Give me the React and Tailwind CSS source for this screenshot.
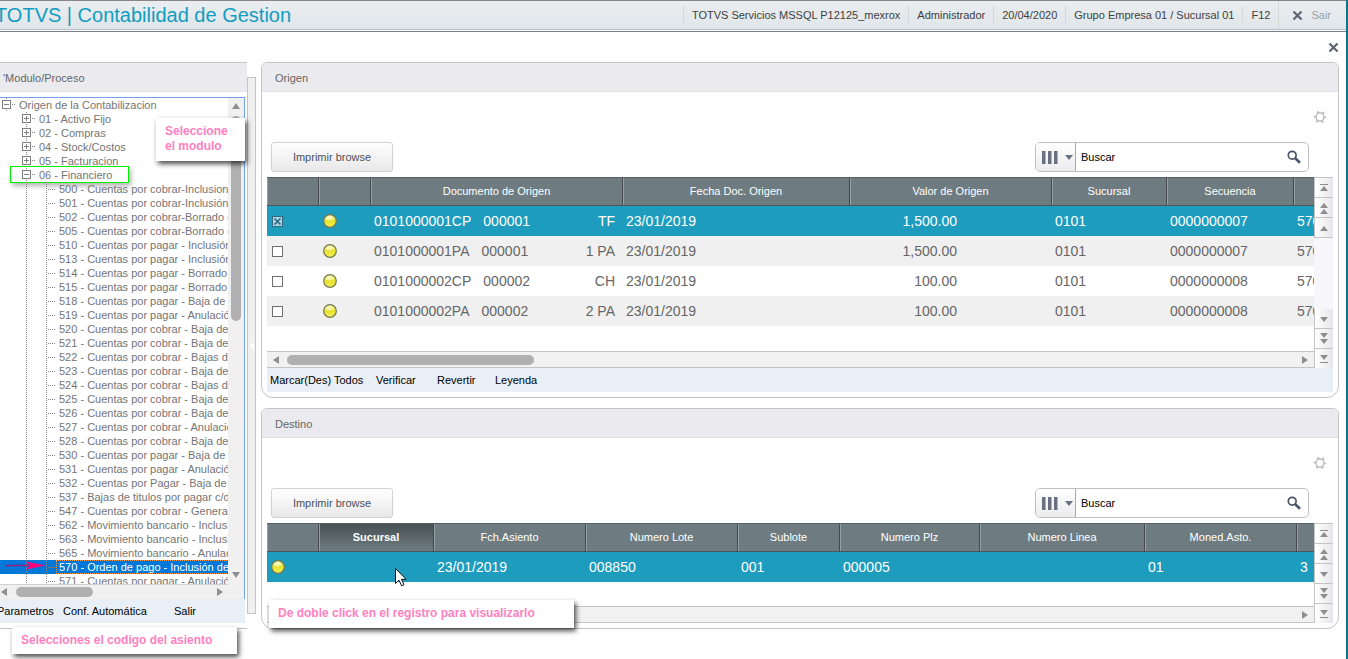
import React from "react";

const SESSION = [
  "TOTVS Servicios MSSQL P12125_mexrox",
  "Administrador",
  "20/04/2020",
  "Grupo Empresa 01 / Sucursal 01",
  "F12",
];

const MODULES = [
  "01 - Activo Fijo",
  "02 - Compras",
  "04 - Stock/Costos",
  "05 - Facturacion",
];

const PROCESSES = [
  "500 - Cuentas por cobrar-Inclusion",
  "501 - Cuentas por cobrar-Inclusión",
  "502 - Cuentas por cobrar-Borrado de",
  "505 - Cuentas por cobrar-Borrado de",
  "510 - Cuentas por pagar - Inclusión",
  "513 - Cuentas por pagar - Inclusión",
  "514 - Cuentas por pagar - Borrado",
  "515 - Cuentas por pagar - Borrado",
  "518 - Cuentas por pagar - Baja de título",
  "519 - Cuentas por pagar - Anulación",
  "520 - Cuentas por cobrar - Baja de",
  "521 - Cuentas por cobrar - Baja de",
  "522 - Cuentas por cobrar - Bajas de",
  "523 - Cuentas por cobrar - Baja de",
  "524 - Cuentas por cobrar - Bajas de",
  "525 - Cuentas por cobrar - Baja de",
  "526 - Cuentas por cobrar - Baja de",
  "527 - Cuentas por cobrar - Anulación",
  "528 - Cuentas por cobrar - Baja de",
  "530 - Cuentas por pagar - Baja de título",
  "531 - Cuentas por pagar - Anulación",
  "532 - Cuentas por Pagar - Baja de título",
  "537 - Bajas de titulos por pagar c/d",
  "547 - Cuentas por cobrar - Genera",
  "562 - Movimiento bancario - Inclusión",
  "563 - Movimiento bancario - Inclusión",
  "565 - Movimiento bancario - Anulación",
  "570 - Orden de pago - Inclusión de",
  "571 - Cuentas por pagar - Anulación",
];

const ORIGIN_ROWS = [
  { doc: "0101000001CP", num: "000001", type: "TF", date: "23/01/2019", value: "1,500.00", branch: "0101", seq: "0000000007", code: "570", checked: true },
  { doc: "0101000001PA", num: "000001", type: "1 PA", date: "23/01/2019", value: "1,500.00", branch: "0101", seq: "0000000007", code: "570" },
  { doc: "0101000002CP", num: "000002", type: "CH", date: "23/01/2019", value: "100.00", branch: "0101", seq: "0000000008", code: "570" },
  { doc: "0101000002PA", num: "000002", type: "2 PA", date: "23/01/2019", value: "100.00", branch: "0101", seq: "0000000008", code: "570" },
];

const CloseIcon = () => (
  <svg width="11" height="11" viewBox="0 0 11 11" stroke="#5d6473" strokeWidth="2.2" fill="none">
    <path d="M1.5 1.5l8 8M9.5 1.5l-8 8" />
  </svg>
);

const GearIcon = () => (
  <svg width="14" height="14" viewBox="0 0 14 14" fill="none" stroke="#bdbdbd">
    <circle cx="7" cy="7" r="4" strokeWidth="1.5" />
    <circle cx="7" cy="7" r="5.3" strokeWidth="1.8" strokeDasharray="2.3 3.25" strokeDashoffset="1.15" />
  </svg>
);

const SearchIcon = () => (
  <svg width="14" height="14" viewBox="0 0 14 14" fill="none" stroke="#4b5468">
    <circle cx="5.2" cy="5.2" r="3.9" strokeWidth="1.7" />
    <path d="M8 8l5 4.8" strokeWidth="2.6" />
  </svg>
);

const Ball = () => (
  <svg className="ml-px block" width="14" height="14" viewBox="0 0 14 14">
    <defs>
      <linearGradient id="ball" x1="0" y1="0" x2="0" y2="1">
        <stop offset="0" stopColor="#fbfbb0" />
        <stop offset="0.5" stopColor="#e6e22a" />
        <stop offset="1" stopColor="#f2ef62" />
      </linearGradient>
    </defs>
    <circle cx="7" cy="7" r="6.3" fill="url(#ball)" stroke="#77784c" strokeWidth="1.2" />
    <ellipse cx="6.4" cy="4.2" rx="3.4" ry="2" fill="#fff" opacity="0.5" />
  </svg>
);

const Arrow = ({ d, size = 8 }) => (
  <svg width={size} height={size} viewBox="0 0 8 8" fill="#8e8e8e">
    <path d={d} />
  </svg>
);

const UP = "M4 1l4 6H0z";
const DOWN = "M0 1h8L4 7z";
const LEFT = "M1 4l6-4v8z";
const RIGHT = "M7 4L1 0v8z";

const STEP_ICONS = {
  first: "M2 2h8v1H2zM6 4l4 5H2z",
  pageUp: "M6 1l4 5H2zM6 7l4 5H2z",
  up: "M6 4l4 5H2z",
  down: "M2 4h8l-4 5z",
  pageDown: "M2 0h8L6 5zM2 6h8l-4 5z",
  last: "M2 2h8L6 7zM2 9h8v1H2z",
};

const StepButton = ({ kind }) => (
  <button
    type="button"
    aria-label={kind}
    className="flex h-5 w-full items-center justify-center border-b border-l border-[#c4c4c4] bg-linear-to-r from-white to-[#e6e6ea]"
  >
    <svg width="12" height="12" viewBox="0 0 12 12" fill="#8e8e8e">
      <path d={STEP_ICONS[kind]} />
    </svg>
  </button>
);

const Stepper = () => (
  <div className="flex w-[19px] shrink-0 flex-col justify-between border-t border-[#c4c4c4] bg-[#f7f7fb]">
    <div>
      <StepButton kind="first" />
      <StepButton kind="pageUp" />
      <div className="hidden group-data-[steps=six]:block">
        <StepButton kind="up" />
      </div>
    </div>
    <div>
      <StepButton kind="down" />
      <StepButton kind="pageDown" />
      <div className="h-[19px] overflow-hidden">
        <StepButton kind="last" />
      </div>
    </div>
  </div>
);

/* Expander box or connector drawn in front of every tree label */
const TreeNode = ({ kind }) => (
  <svg className="shrink-0" width="20" height="14" viewBox="0 0 20 14" fill="none" shapeRendering="crispEdges">
    {kind === "leaf" && <path d="M7.5 0v14M9 7.5h8" stroke="#8a8a8a" strokeDasharray="1 1" />}
    {kind === "line" && <path d="M7.5 0v14" stroke="#8a8a8a" strokeDasharray="1 1" />}
    {(kind === "plus" || kind === "minus") && (
      <>
        <path d="M7.5 0v14M13 6.5h4" stroke="#8a8a8a" strokeDasharray="1 1" />
        <rect x="3.5" y="2.5" width="8" height="8" fill="#fff" stroke="#808080" />
        <path d={kind === "plus" ? "M5 6.5h5M7.5 4v5" : "M5 6.5h5"} stroke="#808080" />
      </>
    )}
  </svg>
);

const Note = ({ className, children }) => (
  <div
    className={`absolute z-10 bg-white text-xs leading-[15px] font-bold text-[#ff80c0] shadow-[2px_3px_5px_rgba(0,0,0,0.7)] ${className}`}
  >
    {children}
  </div>
);

const Panel = ({ title, steps, children }) => (
  <section
    data-steps={steps}
    className="group relative rounded-t-md rounded-b-xl border border-[#c4c4c4] bg-white pb-[5px]"
  >
    <h2 className="h-[29px] rounded-t-md border-b border-[#e2e2e6] bg-[#ebebef] pl-[13px] text-[11px] leading-[30px] text-[#666]">
      {title}
    </h2>
    {children}
  </section>
);

const Toolbar = ({ id }) => (
  <div className="px-[5px]">
    <div className="flex h-[50px] items-center justify-end pr-[6px]">
      <button type="button" aria-label="Configurar">
        <GearIcon />
      </button>
    </div>
    <div className="flex h-[35px] items-start justify-between pr-[24px] pl-1">
      <button
        type="button"
        className="h-[30px] w-[122px] rounded-[3px] border border-[#d2d2d2] bg-linear-to-b from-white to-[#e8e8e8] text-[11px] text-[#4c5058]"
      >
        Imprimir browse
      </button>
      <div className="flex h-[30px] w-[274px] overflow-hidden rounded-[5px] border border-[#c0c0c0] bg-white">
        <button
          type="button"
          aria-label="Columnas"
          className="flex w-10 items-center justify-end gap-[7px] border-r border-[#a8a8a8] bg-linear-to-b from-white to-[#ececf0] pr-[2px]"
        >
          <svg width="16" height="13" viewBox="0 0 16 13" fill="#69707f">
            <path d="M0 0h3.5v13H0zM6 0h3.5v13H6zM12 0h3.5v13H12z" />
          </svg>
          <svg width="8" height="5" viewBox="0 0 8 5" fill="#69707f">
            <path d="M0 0h8L4 5z" />
          </svg>
        </button>
        <label htmlFor={id} className="sr-only">
          Buscar
        </label>
        <input
          id={id}
          type="text"
          defaultValue="Buscar"
          className="min-w-0 flex-1 pl-[5px] text-[11px] text-black outline-none"
        />
        <button type="button" aria-label="Ejecutar" className="pr-[7px]">
          <SearchIcon />
        </button>
      </div>
    </div>
  </div>
);

const Th = ({ children, active }) => (
  <th
    scope="col"
    className={`h-[29px] overflow-hidden border-t border-r border-b border-t-[#566164] border-r-[#43494c] border-b-[#4d5558] p-0 text-center text-[11px] whitespace-nowrap text-white shadow-[inset_1px_0_0_#93a0a4] last:border-r-0 ${
      active ? "bg-linear-to-b from-[#485154] to-[#6e7c81] font-bold" : "bg-[#6e7c81] font-normal"
    }`}
  >
    {children}
  </th>
);

const Td = ({ children, className = "" }) => (
  <td className={`h-[30px] overflow-hidden py-0 pl-[3px] whitespace-nowrap ${className}`}>{children}</td>
);

const HScroll = ({ thumb }) => (
  <div className="flex h-[17px] items-center border-y border-[#c4c4c4] bg-[#f1f1f1] px-[5px]">
    <Arrow d={LEFT} />
    <div className="flex-1 px-[7px]">
      {thumb && <div className="h-[10px] w-[247px] rounded-full bg-[#b0b0b0]" />}
    </div>
    <Arrow d={RIGHT} />
  </div>
);

const RowCheck = ({ label, checked }) => (
  <span className="relative ml-[2px] block size-[11px]">
    <input
      type="checkbox"
      aria-label={label}
      defaultChecked={checked}
      className="peer block size-[11px] appearance-none border border-[#6f6f6f] bg-white checked:border-[#38657a] checked:bg-[#a6d8ec]"
    />
    <svg
      className="pointer-events-none absolute inset-0 hidden peer-checked:block"
      width="11"
      height="11"
      viewBox="0 0 11 11"
      stroke="#2d6580"
      strokeWidth="1.6"
    >
      <path d="M2.5 2.5l6 6M8.5 2.5l-6 6" />
    </svg>
  </span>
);

const OriginGrid = () => (
  <div className="flex px-[5px]">
    <div className="min-w-0 flex-1">
      <div className="h-[174px] overflow-hidden">
        <table className="w-full table-fixed border-separate border-spacing-0">
          <colgroup>
            <col className="w-[52px]" />
            <col className="w-[52px]" />
            <col className="w-[252px]" />
            <col className="w-[227px]" />
            <col className="w-[202px]" />
            <col className="w-[115px]" />
            <col className="w-[127px]" />
            <col />
          </colgroup>
          <thead>
            <tr>
              <Th />
              <Th />
              <Th>Documento de Origen</Th>
              <Th>Fecha Doc. Origen</Th>
              <Th>Valor de Origen</Th>
              <Th>Sucursal</Th>
              <Th>Secuencia</Th>
              <Th />
            </tr>
          </thead>
          <tbody className="text-sm leading-5 text-[#666]">
            {ORIGIN_ROWS.map((row) => (
              <tr
                key={row.doc}
                className={row.checked ? "bg-[#1e9cbe] text-white" : "even:bg-[#f0f0f0]"}
              >
                <Td>
                  <RowCheck label={row.doc} checked={row.checked} />
                </Td>
                <Td>
                  <Ball />
                </Td>
                <Td className="pr-2">
                  <div className="flex gap-3">
                    <span>{row.doc}</span>
                    <span>{row.num}</span>
                    <span className="ml-auto">{row.type}</span>
                  </div>
                </Td>
                <Td>{row.date}</Td>
                <Td className="pr-[95px] text-right">{row.value}</Td>
                <Td>{row.branch}</Td>
                <Td>{row.seq}</Td>
                <Td>{row.code}</Td>
              </tr>
            ))}
          </tbody>
        </table>
      </div>
      <HScroll thumb />
    </div>
    <Stepper />
  </div>
);

const TargetGrid = () => (
  <div className="flex px-[5px]">
    <div className="min-w-0 flex-1">
      <div className="relative h-[83px] overflow-hidden">
        <table className="w-full table-fixed border-separate border-spacing-0">
          <colgroup>
            <col className="w-[52px]" />
            <col className="w-[115px]" />
            <col className="w-[152px]" />
            <col className="w-[152px]" />
            <col className="w-[102px]" />
            <col className="w-[140px]" />
            <col className="w-[165px]" />
            <col className="w-[152px]" />
            <col />
          </colgroup>
          <thead>
            <tr>
              <Th />
              <Th active>Sucursal</Th>
              <Th>Fch.Asiento</Th>
              <Th>Numero Lote</Th>
              <Th>Sublote</Th>
              <Th>Numero Plz</Th>
              <Th>Numero Linea</Th>
              <Th>Moned.Asto.</Th>
              <Th />
            </tr>
          </thead>
          <tbody className="text-sm leading-5 text-white">
            <tr className="bg-[#1e9cbe]">
              <Td>
                <Ball />
              </Td>
              <Td />
              <Td>23/01/2019</Td>
              <Td>008850</Td>
              <Td>001</Td>
              <Td>000005</Td>
              <Td />
              <Td>01</Td>
              <Td>3</Td>
            </tr>
          </tbody>
        </table>
        <svg
          className="absolute top-[44px] left-[127px]"
          width="14"
          height="21"
          viewBox="0 0 14 21"
          fill="#fff"
          stroke="#111"
        >
          <path d="M1.5 1.5v15l3.5-3.3 2.6 5.6 2.4-1.1-2.5-5.4h4.6z" />
        </svg>
      </div>
      <HScroll />
    </div>
    <Stepper />
  </div>
);

const ProcessTree = () => (
  <div className="relative flex flex-1 flex-col">
    <div className="mr-[2px] flex flex-1 border-t border-r border-[#6fa3ef]">
      <div className="flex min-w-0 flex-1 flex-col">
        <ul className="h-0 grow basis-auto overflow-hidden text-[11px] leading-[14px] whitespace-nowrap text-[#757575]">
          <li className="-ml-px flex h-[14px]">
            <TreeNode kind="minus" />
            Origen de la Contabilizacion
          </li>
          {MODULES.map((name) => (
            <li key={name} className="flex h-[14px] pl-[19px]">
              <TreeNode kind="plus" />
              {name}
            </li>
          ))}
          <li className="relative flex h-[14px] pl-[19px]">
            <TreeNode kind="minus" />
            06 - Financiero
            <span className="absolute -top-[2px] left-[10px] h-[17px] w-[119px] border border-[#00f000] shadow-[2px_3px_5px_rgba(0,0,0,0.3)]" />
          </li>
          {PROCESSES.map((name) => {
            const selected = name.startsWith("570");
            return (
              <li
                key={name}
                className={`relative flex h-[14px] pl-[19px] ${selected ? "bg-[#0078d7] text-white" : ""}`}
              >
                <TreeNode kind="line" />
                <TreeNode kind="leaf" />
                <span
                  className={
                    selected ? "-ml-[3px] flex-1 pl-[3px] outline outline-dotted -outline-offset-1 outline-[#ff9a3c]" : ""
                  }
                >
                  {name}
                </span>
                {selected && (
                  <svg className="absolute top-[1px] left-[5px]" width="42" height="9" viewBox="0 0 42 9">
                    <path d="M0 4.5h26" stroke="#a0187c" strokeWidth="1.4" />
                    <path d="M21 0.5l20 4-20 4 4-4z" fill="#ff0080" />
                  </svg>
                )}
              </li>
            );
          })}
        </ul>
        <div className="flex h-[15px] shrink-0 items-center border-t border-[#d0d0d0] bg-[#f0f0f0] pr-1">
          <Arrow d={LEFT} />
          <div className="flex-1 pl-2">
            <div className="h-[10px] w-[77px] rounded-full bg-[#b0b0b0]" />
          </div>
          <Arrow d={RIGHT} />
        </div>
      </div>
      <div className="flex w-4 shrink-0 flex-col items-center bg-[#f0f0f0] pt-1 pb-[20px]">
        <Arrow d={UP} />
        <div className="mt-[6px] mb-auto h-[205px] w-[10px] rounded-full bg-[#b0b0b0]" />
        <Arrow d={DOWN} />
      </div>
    </div>
    <div className="mr-[2px] flex h-6 shrink-0 items-center bg-[#e8eff7] text-[11px] text-black">
      <button type="button" className="-ml-[3px] w-[66px] text-left">Parametros</button>
      <button type="button" className="w-[111px] text-left">Conf. Automática</button>
      <button type="button">Salir</button>
    </div>
    <Note className="top-[21px] left-[156px] h-[43px] w-[89px] py-[6px] pl-[9px]">
      Seleccione
      <br />
      el modulo
    </Note>
  </div>
);

const App = () => {
  return (
    <div className="min-h-screen overflow-hidden border-r-2 border-[#0c738c] bg-white font-['Liberation_Sans',Arial,sans-serif]">
      <header className="flex h-8 items-center justify-between border-t border-b border-t-[#8a8486] border-b-[#7d7f82] bg-linear-to-b from-[#ebeef0] to-[#dfe5ea] pb-[2px] shadow-[inset_0_-1px_0_#f4f6f8,inset_0_-2px_0_#b4c4cc]">
        <h1 className="-ml-[5px] text-xl leading-7 whitespace-nowrap text-[#119dc0]">TOTVS | Contabilidad de Gestion</h1>
        <div className="flex h-full items-center text-[11px] whitespace-nowrap text-[#404040]">
          {SESSION.map((item) => (
            <span key={item} className="flex h-[18px] items-center border-l border-[#d3d8da] px-2">
              {item}
            </span>
          ))}
          <button
            type="button"
            className="flex h-full items-center gap-2 border-l border-[#d3d8da] pr-[15px] pl-[13px] text-[#9a9fa8]"
          >
            <CloseIcon />
            Sair
          </button>
        </div>
      </header>

      <div className="flex h-[30px] items-center justify-end pr-[7px]">
        <button type="button" aria-label="Cerrar">
          <CloseIcon />
        </button>
      </div>

      <main className="flex pr-[7px]">
        <aside className="relative flex w-[247px] shrink-0 flex-col border-t border-b border-[#c4c4c4] pb-[5px]">
          <h2 className="mb-[5px] h-[29px] shrink-0 border-b border-[#e2e2e6] bg-[#ebebef] pl-[3px] text-[11px] leading-[30px] text-[#666]">
            'Modulo/Proceso
          </h2>
          <ProcessTree />
          <Note className="-bottom-[26px] left-3 h-[27px] w-[225px] pt-[6px] pl-[9px]">
            Selecciones el codigo del asiento
          </Note>
        </aside>

        <div className="mt-[15px] mr-[5px] mb-[15px] flex w-[9px] shrink-0 items-center justify-center border border-[#c4c4c4] bg-[#f0f0f0]">
          <svg width="4" height="8" viewBox="0 0 4 8" fill="#fff">
            <path d="M4 0v8L0 4z" />
          </svg>
        </div>

        <div className="flex min-w-0 flex-1 flex-col gap-[10px]">
          <Panel title="Origen" steps="six">
            <Toolbar id="origin-search" />
            <OriginGrid />
            <div className="mx-[5px] flex h-6 items-center bg-[#e8eff7] pl-[3px] text-[11px] text-black">
              <button type="button" className="w-[106px] text-left">Marcar(Des) Todos</button>
              <button type="button" className="w-[61px] text-left">Verificar</button>
              <button type="button" className="w-[58px] text-left">Revertir</button>
              <button type="button">Leyenda</button>
            </div>
          </Panel>

          <Panel title="Destino" steps="five">
            <Toolbar id="target-search" />
            <TargetGrid />
            <Note className="bottom-0 left-[7px] h-[28px] w-[305px] pt-[6px] pl-[9px]">
              De doble click en el registro para visualizarlo
            </Note>
          </Panel>
        </div>
      </main>
    </div>
  );
};

export default App;
